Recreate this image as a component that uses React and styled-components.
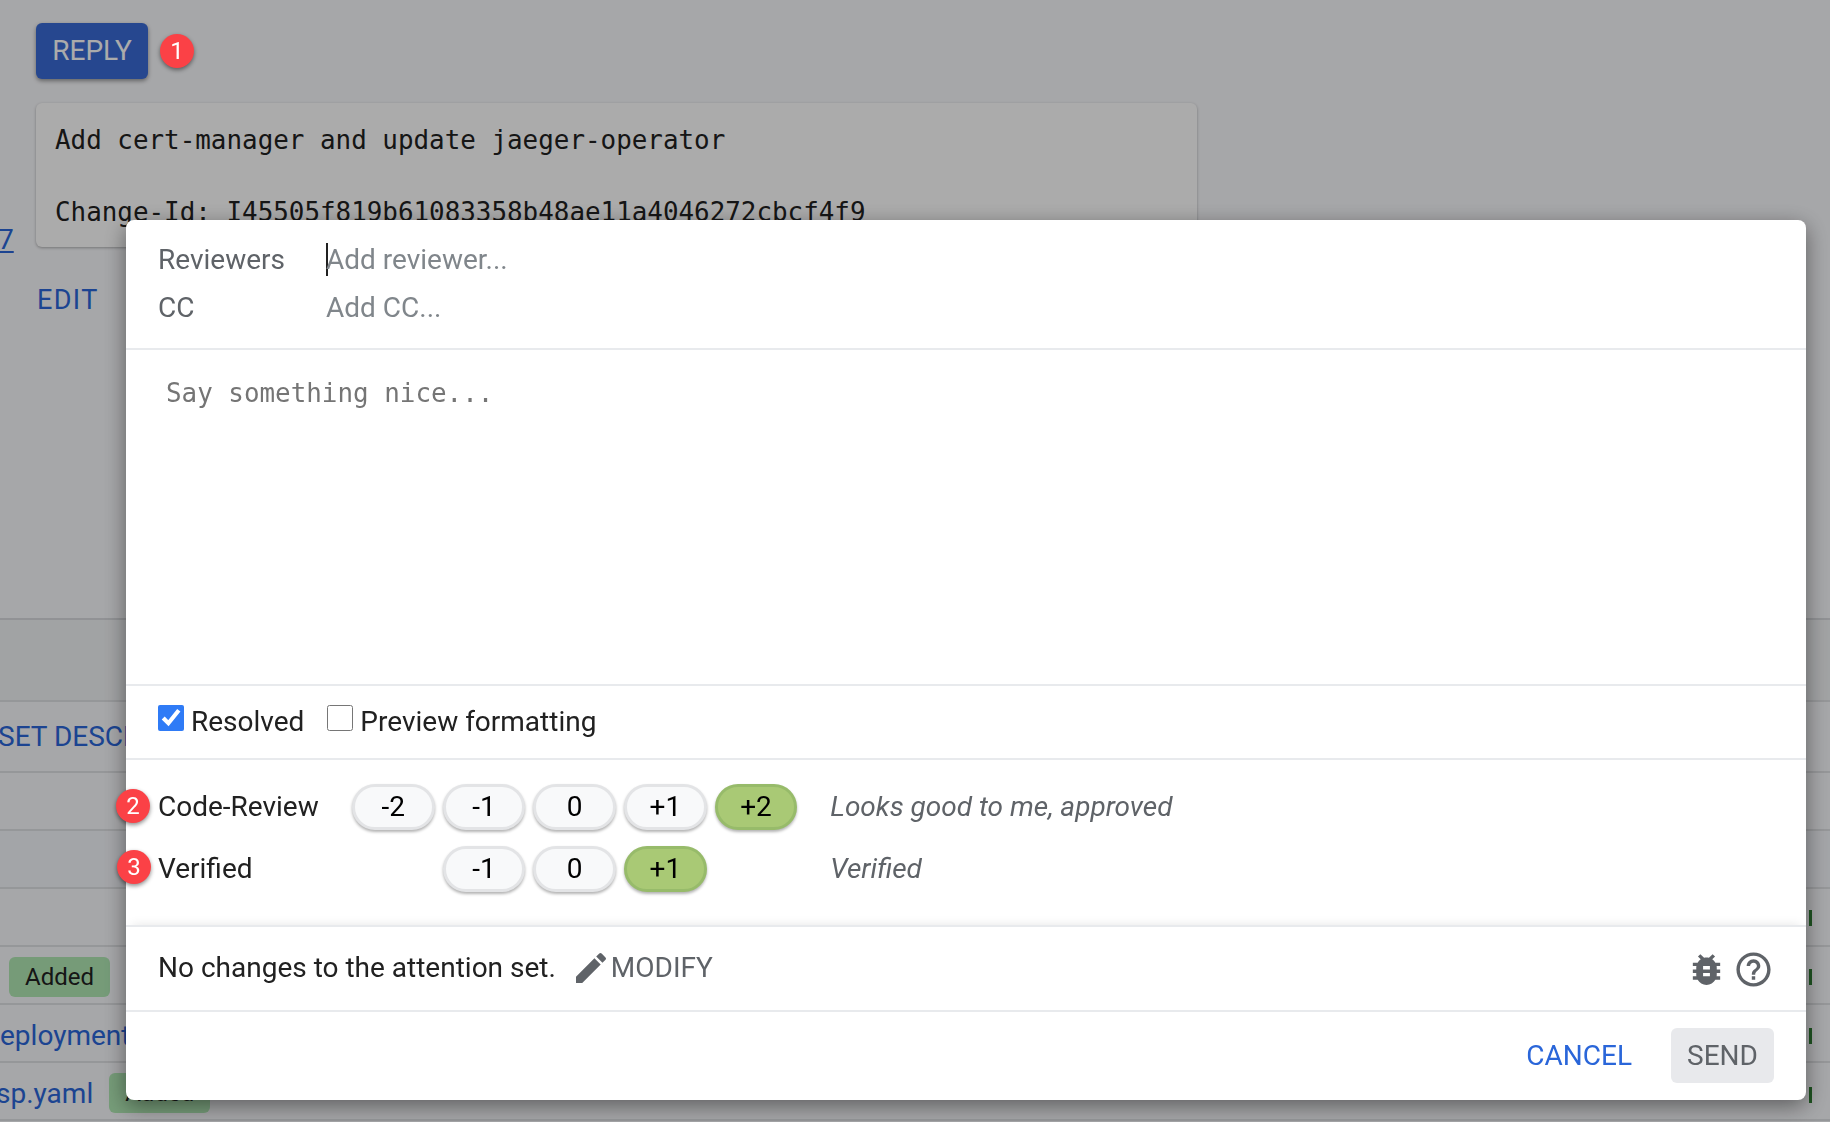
import React from 'react';
import styled, { createGlobalStyle } from 'styled-components';
import { MdEdit, MdBugReport, MdHelpOutline } from 'react-icons/md';

const GlobalStyle = createGlobalStyle`
  html, body {
    margin: 0;
    height: 100%;
    overflow: hidden;
    background: #f8f9fc;
    font-family: Roboto, "Liberation Sans", sans-serif;
    color: #212121;
  }
`;

const Page = styled.div`
  width: 1830px;
  height: 1122px;
  overflow: hidden;
`;

const TopSection = styled.section`
  height: 620px;
  padding-top: 23px;
  box-sizing: border-box;
  border-bottom: 2px solid #d8dade;
  box-shadow: 0 2px 3px rgba(0, 0, 0, 0.12);
`;

const ReplyRow = styled.div`
  display: flex;
  align-items: center;
  gap: 12px;
  margin-left: 36px;
`;

const ReplyButton = styled.button`
  width: 112px;
  height: 56px;
  padding: 0 0 2px;
  border: 0;
  border-radius: 6px;
  background: #3a6bd6;
  color: #fff;
  font: 450 28px Roboto, sans-serif;
  box-shadow: 0 2px 4px rgba(0, 0, 0, 0.4);
`;

const CommitRow = styled.div`
  display: flex;
  margin-top: 24px;
`;

const StrayLink = styled.a`
  width: 38px;
  margin-left: -2px;
  align-self: flex-end;
  margin-bottom: -5px;
  color: #2a66d9;
  font-size: 28px;
  line-height: 24px;
  text-decoration: underline;
`;

const CommitCard = styled.pre`
  width: 1161px;
  height: 144px;
  margin: 0;
  padding: 19px 19px;
  box-sizing: border-box;
  border-radius: 6px;
  background: #fff;
  font: 25.9px/36px "DejaVu Sans Mono", monospace;
  color: #212121;
  box-shadow: 0 1px 3px rgba(0, 0, 0, 0.3);
`;

const EditLink = styled.div`
  margin: 37px 0 0 37px;
  color: #2a66d9;
  font-size: 27px;
  letter-spacing: 1.4px;
  line-height: 32px;
`;

const DescriptionBand = styled.div`
  height: 80px;
  background: #f1f3f5;
`;

const BandRow = styled.div`
  display: flex;
  align-items: center;
  height: 73px;
  box-sizing: border-box;
  border-top: 2px solid #dfe1e4;
  border-bottom: 2px solid #dfe1e4;
  white-space: nowrap;
`;

const BandLabel = styled.span`
  margin-left: -2px;
  color: #2a66d9;
  font-size: 28px;
`;

const FileRow = styled.div`
  position: relative;
  display: flex;
  align-items: center;
  gap: 16px;
  height: 58px;
  box-sizing: border-box;
  padding: 4px 0 0 ${(p) => p.$indent || 0}px;
  border-bottom: 2px solid #dfe1e4;
  white-space: nowrap;
  background: ${(p) => (p.$shade ? '#f4f6fb' : 'transparent')};
`;

const FileLink = styled.span`
  margin-left: ${(p) => p.$shift || 0}px;
  color: #2a66d9;
  font-size: 28px;
`;

const StatusChip = styled.span`
  display: inline-flex;
  align-items: center;
  justify-content: center;
  width: 101px;
  height: 40px;
  border-radius: 6px;
  background: #b0e8b4;
  font-size: 24px;
`;

const DeltaTick = styled.i`
  position: absolute;
  left: 1809px;
  top: ${(p) => p.$top}px;
  width: 3px;
  height: 16px;
  background: #2e7d32;
`;

const Scrim = styled.div`
  position: fixed;
  inset: 0;
  z-index: 1;
  background: rgba(0, 0, 0, 0.33);
`;

const Dialog = styled.div`
  position: fixed;
  left: 126px;
  top: 220px;
  z-index: 2;
  width: 1680px;
  height: 880px;
  display: flex;
  flex-direction: column;
  border-radius: 8px;
  background: #fff;
  box-shadow: 0 6px 22px rgba(0, 0, 0, 0.45);
`;

const PeopleSection = styled.div`
  height: 130px;
  box-sizing: border-box;
  padding: 15px 32px 0;
  border-bottom: 2px solid #e8eaed;
`;

const PeopleRow = styled.div`
  display: flex;
  align-items: center;
  height: 48px;
`;

const PeopleLabel = styled.div`
  width: 168px;
  color: #5f6368;
  font-size: 28px;
  font-weight: 450;
`;

const PeopleInput = styled.input`
  flex: 1;
  padding: 0;
  border: 0;
  outline: none;
  background: transparent;
  font: 28px Roboto, sans-serif;
  &::placeholder {
    color: #80868b;
    opacity: 1;
  }
`;

const Caret = styled.i`
  width: 1.5px;
  height: 33px;
  margin-right: -1.5px;
  background: #212121;
`;

const MessageArea = styled.textarea`
  display: block;
  height: 336px;
  box-sizing: border-box;
  padding: 28px 40px;
  border: 0;
  border-bottom: 2px solid #e8eaed;
  outline: none;
  resize: none;
  font: 25.9px/30px "DejaVu Sans Mono", monospace;
  &::placeholder {
    color: #757575;
    opacity: 1;
  }
`;

const OptionsRow = styled.div`
  display: flex;
  align-items: center;
  gap: 23px;
  height: 74px;
  box-sizing: border-box;
  padding: 0 32px;
  border-bottom: 2px solid #e8eaed;
`;

const Option = styled.label`
  display: flex;
  align-items: center;
  gap: 7px;
  padding-bottom: 2px;
  font-size: 28px;
`;

const Check = styled.input`
  width: 26px;
  height: 26px;
  margin: -6px 0 0;
  accent-color: #2f7bf6;
`;

const LabelsSection = styled.div`
  display: flex;
  flex-direction: column;
  gap: 16px;
  height: 165px;
  box-sizing: border-box;
  padding: 24px 32px 0;
`;

const LabelRow = styled.div`
  position: relative;
  display: flex;
  align-items: center;
  height: 46px;
`;

const LabelName = styled.div`
  width: 194px;
  padding-bottom: 2px;
  font-size: 28px;
`;

const VoteGroup = styled.div`
  display: grid;
  grid-template-columns: repeat(5, 82.5px);
  column-gap: 8.2px;
`;

const VoteButton = styled.button`
  grid-column-start: ${(p) => p.$start || 'auto'};
  height: 46px;
  padding: 0 0 2px;
  box-sizing: border-box;
  border: 3px solid ${(p) => (p.$selected ? '#97bb6a' : '#e3e4e6')};
  border-radius: 23px;
  background: ${(p) => (p.$selected ? '#a9c975' : '#f8f9fa')};
  color: #000;
  font: 28px Roboto, sans-serif;
  box-shadow: 0 2px 3px rgba(0, 0, 0, 0.3);
`;

const VoteText = styled.div`
  margin-left: 33px;
  padding-bottom: 2px;
  color: #5f6368;
  font-size: 28px;
  font-style: italic;
`;

const StepBadge = styled.span`
  position: absolute;
  left: ${(p) => p.$left}px;
  top: ${(p) => p.$top}px;
  display: flex;
  align-items: center;
  justify-content: center;
  width: 34px;
  height: 34px;
  border-radius: 50%;
  background: #fb4146;
  color: #fff;
  font: 24px Roboto, sans-serif;
  box-shadow: 0 2px 4px rgba(0, 0, 0, 0.45);
`;

const InlineBadge = styled(StepBadge)`
  position: relative;
  left: auto;
  top: auto;
  z-index: 2;
`;

const AttentionRow = styled.div`
  display: flex;
  align-items: center;
  height: 87px;
  box-sizing: border-box;
  padding: 0 32px 2px 32px;
  border-top: 2px solid #e8eaed;
  border-bottom: 2px solid #e8eaed;
  box-shadow: 0 -6px 10px -6px rgba(0, 0, 0, 0.1);
`;

const AttentionText = styled.div`
  font-size: 28px;
`;

const ModifyButton = styled.div`
  display: flex;
  align-items: center;
  margin-left: 15px;
  color: #5f6368;
  font-size: 28px;
  font-weight: 450;
  svg {
    width: 40px;
    height: 40px;
  }
`;

const RightIcons = styled.div`
  display: flex;
  align-items: center;
  margin-left: auto;
  padding-top: 4px;
  color: #5f6368;
  svg {
    width: 41px;
    height: 41px;
    margin-left: 6px;
  }
`;

const ActionsRow = styled.div`
  display: flex;
  align-items: flex-start;
  justify-content: flex-end;
  flex: 1;
  gap: 39px;
  padding: 16px 32px 0 0;
`;

const CancelButton = styled.div`
  height: 55px;
  color: #2a66d9;
  font-size: 28px;
  font-weight: 450;
  line-height: 55px;
`;

const SendButton = styled.button`
  width: 103px;
  height: 55px;
  padding: 0;
  border: 0;
  border-radius: 6px;
  background: #e8e9ec;
  color: #5f6368;
  font: 450 28px Roboto, sans-serif;
`;

const App = () => (
  <Page>
    <GlobalStyle />
    <TopSection>
      <ReplyRow>
        <ReplyButton>REPLY</ReplyButton>
        <InlineBadge>1</InlineBadge>
      </ReplyRow>
      <CommitRow>
        <StrayLink>7</StrayLink>
        <CommitCard>{'Add cert-manager and update jaeger-operator\n\nChange-Id: I45505f819b61083358b48ae11a4046272cbcf4f9'}</CommitCard>
      </CommitRow>
      <EditLink>EDIT</EditLink>
    </TopSection>
    <DescriptionBand />
    <BandRow><BandLabel>SET DESCRIPTION</BandLabel></BandRow>
    <FileRow />
    <FileRow $shade />
    <FileRow>
      <DeltaTick $top={21} />
    </FileRow>
    <FileRow $indent={9}>
      <StatusChip>Added</StatusChip>
      <DeltaTick $top={22} />
    </FileRow>
    <FileRow>
      <FileLink>eployment</FileLink>
      <DeltaTick $top={23} />
    </FileRow>
    <FileRow>
      <FileLink $shift={-4}>sp.yaml</FileLink>
      <StatusChip>Added</StatusChip>
      <DeltaTick $top={24} />
    </FileRow>
    <Scrim />
    <Dialog>
      <PeopleSection>
        <PeopleRow>
          <PeopleLabel>Reviewers</PeopleLabel>
          <Caret />
          <PeopleInput placeholder="Add reviewer..." />
        </PeopleRow>
        <PeopleRow>
          <PeopleLabel>CC</PeopleLabel>
          <PeopleInput placeholder="Add CC..." />
        </PeopleRow>
      </PeopleSection>
      <MessageArea placeholder="Say something nice..." />
      <OptionsRow>
        <Option><Check type="checkbox" defaultChecked />Resolved</Option>
        <Option><Check type="checkbox" />Preview formatting</Option>
      </OptionsRow>
      <LabelsSection>
        <LabelRow>
          <StepBadge $left={-42} $top={5}>2</StepBadge>
          <LabelName>Code-Review</LabelName>
          <VoteGroup>
            <VoteButton>-2</VoteButton>
            <VoteButton>-1</VoteButton>
            <VoteButton>0</VoteButton>
            <VoteButton>+1</VoteButton>
            <VoteButton $selected>+2</VoteButton>
          </VoteGroup>
          <VoteText>Looks good to me, approved</VoteText>
        </LabelRow>
        <LabelRow>
          <StepBadge $left={-41} $top={4}>3</StepBadge>
          <LabelName>Verified</LabelName>
          <VoteGroup>
            <VoteButton $start={2}>-1</VoteButton>
            <VoteButton>0</VoteButton>
            <VoteButton $selected>+1</VoteButton>
          </VoteGroup>
          <VoteText>Verified</VoteText>
        </LabelRow>
      </LabelsSection>
      <AttentionRow>
        <AttentionText>No changes to the attention set.</AttentionText>
        <ModifyButton><MdEdit />MODIFY</ModifyButton>
        <RightIcons><MdBugReport /><MdHelpOutline /></RightIcons>
      </AttentionRow>
      <ActionsRow>
        <CancelButton>CANCEL</CancelButton>
        <SendButton>SEND</SendButton>
      </ActionsRow>
    </Dialog>
  </Page>
);

export default App;
